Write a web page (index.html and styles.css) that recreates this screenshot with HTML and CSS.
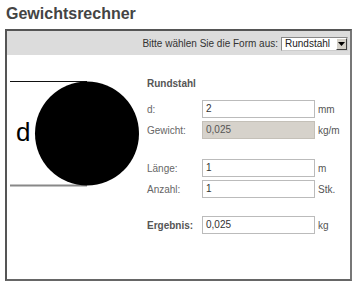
FILE: index.html
```html
<!DOCTYPE html>
<html lang="de">
<head>
    <meta charset="UTF-8">
    <title>Gewichtsrechner</title>
    <link rel="stylesheet" href="styles.css">
</head>
<body>
    <h1 class="title">Gewichtsrechner</h1>

    <div class="calc">
        <div class="calc-head">
            <span class="calc-prompt">Bitte wählen Sie die Form aus:</span>
            <div class="select">
                <span class="select-value">Rundstahl</span>
                <span class="select-btn">
                    <svg width="7" height="4" viewBox="0 0 7 4"><path d="M0 0H7L3.5 4Z" fill="#000"/></svg>
                </span>
            </div>
        </div>

        <div class="calc-body">
            <svg class="figure" width="140" height="224" viewBox="0 0 140 224">
                <line x1="3" y1="26.5" x2="80" y2="26.5" stroke="#111" stroke-width="1"/>
                <line x1="3" y1="130.5" x2="80" y2="130.5" stroke="#888" stroke-width="2"/>
                <circle cx="80" cy="78.5" r="52" fill="#000"/>
                <text x="9" y="86" font-family="Liberation Sans, Arial, sans-serif" font-size="26" fill="#000">d</text>
            </svg>

            <div class="form">
                <div class="form-title">Rundstahl</div>

                <div class="row">
                    <span class="label">d:</span>
                    <span class="field">2</span>
                    <span class="unit">mm</span>
                </div>
                <div class="row">
                    <span class="label">Gewicht:</span>
                    <span class="field field-ro">0,025</span>
                    <span class="unit">kg/m</span>
                </div>

                <div class="row row-gap">
                    <span class="label">Länge:</span>
                    <span class="field">1</span>
                    <span class="unit">m</span>
                </div>
                <div class="row">
                    <span class="label">Anzahl:</span>
                    <span class="field">1</span>
                    <span class="unit">Stk.</span>
                </div>

                <div class="row row-result">
                    <span class="label label-strong">Ergebnis:</span>
                    <span class="field">0,025</span>
                    <span class="unit">kg</span>
                </div>
            </div>
        </div>
    </div>
</body>
</html>
```

FILE: styles.css
```css
* {
    margin: 0;
    padding: 0;
    box-sizing: border-box;
}

body {
    font-family: 'Liberation Sans', Arial, sans-serif;
    font-size: 10px;
    color: #555;
    background: #fff;
    padding: 5px 0 0 5px;
}

.title {
    font-size: 16px;
    font-weight: bold;
    color: #444;
    line-height: 18px;
    padding-left: 1px;
    margin-bottom: 6px;
}

.calc {
    width: 347px;
    height: 252px;
    border: 2px solid #555;
    border-right-color: #777;
    border-bottom-color: #666;
    display: flex;
    flex-direction: column;
}

.calc-head {
    height: 25px;
    background: #dcdcdc;
    display: flex;
    align-items: center;
    justify-content: flex-end;
    padding-right: 2px;
}

.calc-prompt {
    color: #333;
    margin-right: 3px;
}

.select {
    width: 67px;
    height: 14px;
    border: 1px solid;
    border-color: #888 #ccc #ccc #888;
    background: #fff;
    display: flex;
    align-items: center;
    justify-content: space-between;
    margin-top: 1px;
}

.select-value {
    color: #222;
    padding-left: 3px;
    line-height: 12px;
}

.select-btn {
    width: 11px;
    height: 12px;
    background: #d4d0c8;
    border: 1px solid;
    border-color: #fff #404040 #404040 #fff;
    display: flex;
    align-items: center;
    justify-content: center;
}

.calc-body {
    flex: 1;
    display: flex;
}

.figure {
    flex: none;
    display: block;
}

.form {
    padding-top: 21px;
}

.form-title {
    font-weight: bold;
    color: #555;
    line-height: 16px;
    margin-bottom: 8px;
}

.row {
    display: flex;
    align-items: center;
    height: 18px;
    margin-top: 3px;
}

.row-gap {
    margin-top: 20px;
}

.row-result {
    margin-top: 18px;
}

.label {
    width: 55px;
    color: #666;
}

.label-strong {
    font-weight: bold;
    color: #555;
}

.field {
    width: 113px;
    height: 18px;
    border: 1px solid #bbb;
    background: #fff;
    color: #333;
    line-height: 16px;
    padding-left: 3px;
}

.field-ro {
    background: #d6d2cb;
    border-color: #c4c0b8;
    color: #555;
}

.unit {
    margin-left: 3px;
    color: #555;
}
```
